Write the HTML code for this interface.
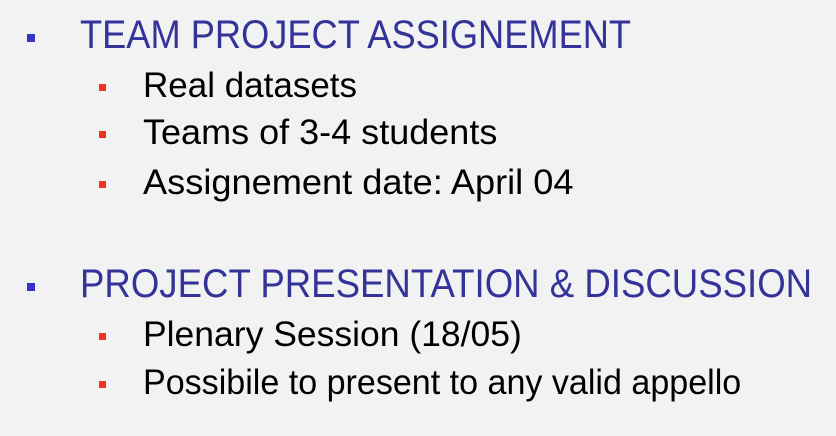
<!DOCTYPE html>
<html><head><style>
html,body{margin:0;padding:0;}
body{width:836px;height:436px;background:#f2f2f2;position:relative;overflow:hidden;font-family:"Liberation Sans",sans-serif;}
.t{position:absolute;white-space:nowrap;line-height:1;transform-origin:0 0;}
.h{color:#333399;font-size:40px;left:80px;transform:scaleX(0.906);}
.i{color:#000;font-size:35px;left:143px;}
.bb{position:absolute;width:8px;height:8px;background:#3333cc;left:27px;}
.rb{position:absolute;width:7px;height:7px;background:#ee3322;left:99px;}
</style></head><body>
<div class="bb" style="top:34px"></div>
<div class="t h" style="top:15px">TEAM PROJECT ASSIGNEMENT</div>
<div class="rb" style="top:84px"></div>
<div class="t i" style="top:68px">Real datasets</div>
<div class="rb" style="top:131px"></div>
<div class="t i" style="top:115px;transform:scaleX(1.029)">Teams of 3-4 students</div>
<div class="rb" style="top:181px"></div>
<div class="t i" style="top:165px;transform:scaleX(1.034)">Assignement date: April 04</div>
<div class="bb" style="top:283px"></div>
<div class="t h" style="top:264px;transform:scaleX(0.915)">PROJECT PRESENTATION &amp; DISCUSSION</div>
<div class="rb" style="top:333px"></div>
<div class="t i" style="top:317px;transform:scaleX(1.014)">Plenary Session (18/05)</div>
<div class="rb" style="top:381px"></div>
<div class="t i" style="top:365px;transform:scaleX(0.973)">Possibile to present to any valid appello</div>
</body></html>
